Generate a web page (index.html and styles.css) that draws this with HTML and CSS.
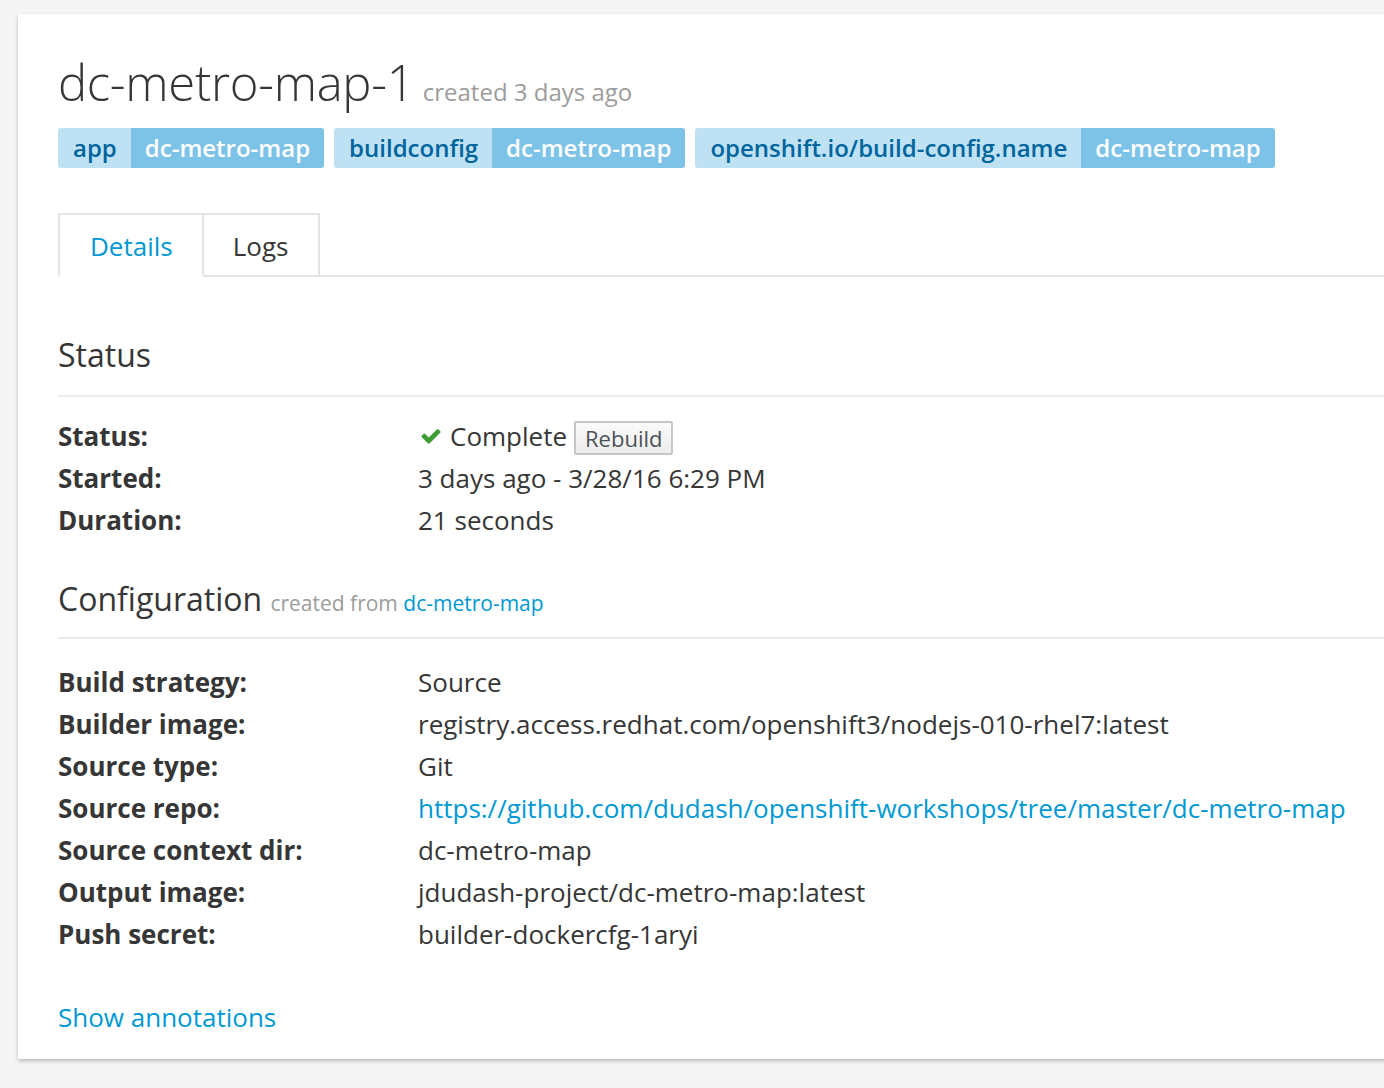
FILE: index.html
```html
<!DOCTYPE html>
<html>
<head>
<meta charset="utf-8">
<link rel="stylesheet" href="styles.css">
</head>
<body>
<div class="card">
  <h1 class="title">dc-metro-map-1 <small class="meta">created 3 days ago</small></h1>
  <div class="labels">
    <span class="label"><span class="key">app</span><span class="val">dc-metro-map</span></span>
    <span class="label"><span class="key">buildconfig</span><span class="val">dc-metro-map</span></span>
    <span class="label"><span class="key">openshift.io/build-config.name</span><span class="val">dc-metro-map</span></span>
  </div>
  <div class="tabs">
    <a class="tab active">Details</a>
    <a class="tab">Logs</a>
    <div class="tab-rest"></div>
  </div>
  <h2 class="section">Status</h2>
  <dl class="props">
    <dt>Status:</dt>
    <dd><svg class="check" viewBox="0 0 1792 1792" width="22" height="22"><path fill="#3f9c35" d="M1671 566q0 40-28 68l-724 724-136 136q-28 28-68 28t-68-28l-136-136-362-362q-28-28-28-68t28-68l136-136q28-28 68-28t68 28l294 295 656-657q28-28 68-28t68 28l136 136q28 28 28 68z"/></svg> Complete <button class="btn">Rebuild</button></dd>
    <dt>Started:</dt>
    <dd>3 days ago - 3/28/16 6:29 PM</dd>
    <dt>Duration:</dt>
    <dd>21 seconds</dd>
  </dl>
  <h2 class="section config">Configuration <small class="meta-sm">created from <a class="link">dc-metro-map</a></small></h2>
  <dl class="props props-config">
    <dt>Build strategy:</dt>
    <dd>Source</dd>
    <dt>Builder image:</dt>
    <dd>registry.access.redhat.com/openshift3/nodejs-010-rhel7:latest</dd>
    <dt>Source type:</dt>
    <dd>Git</dd>
    <dt>Source repo:</dt>
    <dd><a class="link">https://github.com/dudash/openshift-workshops/tree/master/dc-metro-map</a></dd>
    <dt>Source context dir:</dt>
    <dd>dc-metro-map</dd>
    <dt>Output image:</dt>
    <dd>jdudash-project/dc-metro-map:latest</dd>
    <dt>Push secret:</dt>
    <dd>builder-dockercfg-1aryi</dd>
  </dl>
  <a class="link annotations">Show annotations</a>
</div>
</body>
</html>
```

FILE: styles.css
```css
html, body {
  margin: 0;
  padding: 0;
}
body {
  background: #f5f5f5;
  font-family: "Open Sans", "Liberation Sans", sans-serif;
  color: #363636;
  overflow: hidden;
  height: 1088px;
  padding: 14px 0 0 18px;
  box-sizing: border-box;
}
.card {
  background: #fff;
  margin-right: -40px;
  padding: 38px 0 21px 40px;
  box-shadow: 0 2px 4px rgba(0,0,0,0.25);
}
.title {
  margin: 0;
  font-size: 49px;
  font-weight: 300;
  line-height: 60px;
  color: #363636;
  letter-spacing: -0.3px;
}
.meta {
  font-size: 24px;
  font-weight: 400;
  color: #9c9c9c;
  margin-left: -4px;
  letter-spacing: 0;
}
.labels {
  display: flex;
  gap: 10px;
  margin-top: 6px;
}
.label {
  display: flex;
  font-size: 24px;
  font-weight: 600;
  line-height: 40px;
  border-radius: 3px;
  overflow: hidden;
}
.key {
  background: #bee1f4;
  color: #00659c;
  padding: 0 14px 0 15px;
}
.val {
  background: #7dc3e8;
  color: #fff;
  padding: 0 14px;
}
.tabs {
  display: flex;
  margin-top: 45px;
  height: 64px;
}
.tab {
  font-size: 26px;
  line-height: 62px;
  padding: 0 30px 0 29px;
  border: 2px solid #e4e4e4;
  color: #363636;
}
.tab + .tab {
  border-left: none;
}
.tab.active {
  color: #0099d3;
  border-bottom-color: transparent;
  padding: 0 29px 0 30px;
}
.tab-rest {
  flex: 1;
  border-bottom: 2px solid #e4e4e4;
}
.section {
  margin: 56px 0 0;
  font-size: 32px;
  font-weight: 400;
  line-height: 44px;
  padding-bottom: 18px;
  border-bottom: 2px solid #ebebeb;
  color: #363636;
}
.section.config {
  margin-top: 36px;
  padding-bottom: 12px;
}
.meta-sm {
  font-size: 21px;
  color: #9c9c9c;
}
.link {
  color: #0099d3;
  text-decoration: none;
}
.props {
  display: grid;
  grid-template-columns: 360px 1fr;
  margin: 18px 0 0;
  font-size: 26px;
  line-height: 42px;
}
.props-config {
  margin-top: 22px;
}
.props dt {
  font-weight: 700;
  color: #363636;
}
.props dd {
  margin: 0;
  display: flex;
  align-items: center;
  white-space: nowrap;
}
.check {
  margin: 0 8px 0 2px;
}
.btn {
  font-family: inherit;
  font-size: 22px;
  color: #4d5258;
  background: linear-gradient(#fafafa, #ededed);
  border: 2px solid #c6c6c6;
  border-radius: 2px;
  line-height: 30px;
  padding: 0 9px;
  margin-left: 7px;
  margin-top: 4px;
}
.annotations {
  display: block;
  margin-top: 41px;
  font-size: 26px;
  line-height: 42px;
}
```
